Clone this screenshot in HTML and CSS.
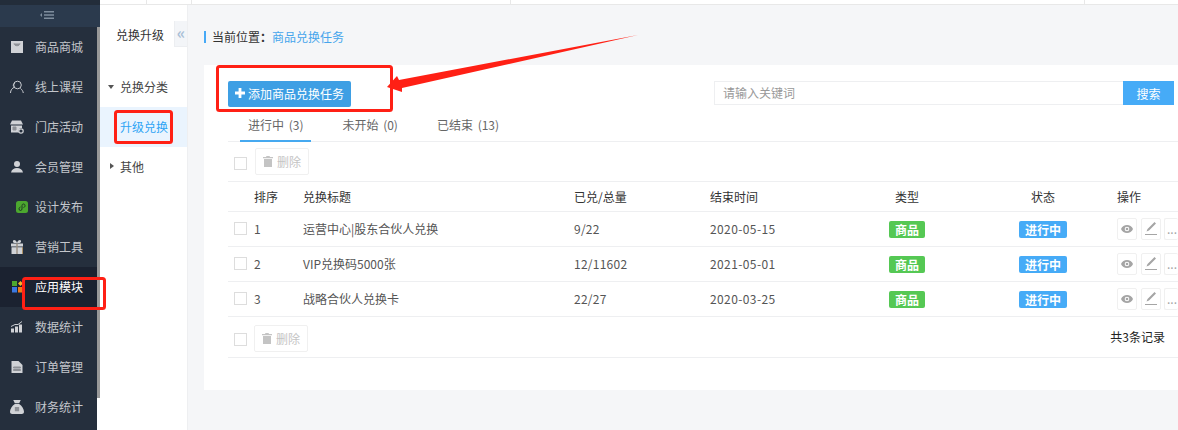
FILE: index.html
```html
<!DOCTYPE html>
<html lang="zh-CN">
<head>
  <meta charset="UTF-8" />
  <meta name="viewport" content="width=device-width, initial-scale=1.0" />
  <title>商品兑换任务</title>
  <link rel="stylesheet" href="styles.css">
</head>
<body>
  <div class="page">
    <aside class="side">
      <div class="side-toggle">
        <svg width="16" height="8" viewBox="0 0 16 8"><path class="toggle-icon" d="M0 4l2-2v4zM4 0h10v1.400H4zM4 3.300h10v1.400H4zM4 6.600h10V8H4z"/></svg>
      </div>
      <div class="side-body">
        <ul class="nav">
          <li class="nav-item">
            <svg class="nav-icon" viewBox="0 0 12 12"><path d="M0 0h12v12H0z"/><path class="cut" d="M3 2.500c.5 3 5.500 3 6 0" fill="none" stroke-width="1"/></svg>
            商品商城
          </li>
          <li class="nav-item">
            <svg class="nav-icon wide" viewBox="0 0 14 14" fill="none"><circle class="line" cx="7.500" cy="5" r="3.800"/><path class="line" d="M.5 13c0-3 1.800-5 4-5.800M5 2.500C3.500 3.500 3 5 3.500 6.500M10.500 8.500c1.500 1 2.500 2.800 2.800 4.500"/></svg>
            线上课程
          </li>
          <li class="nav-item">
            <svg class="nav-icon wide" viewBox="0 0 14 13"><path d="M2 0h9l2 4H0zM1 5h11v2.500a3 3 0 0 0-3 4.500H1z"/><path class="cut" d="M3 6.500h3v3H3z"/><circle cx="11" cy="10.500" r="2.200" fill="none" stroke="#d0d2d6" stroke-width="1.200"/></svg>
            门店活动
          </li>
          <li class="nav-item">
            <svg class="nav-icon" viewBox="0 0 12 12"><circle cx="6" cy="3" r="3"/><path d="M0 11.500C.5 8.500 3 7 6 7s5.500 1.500 6 4.500z"/></svg>
            会员管理
          </li>
          <li class="nav-item">
            <svg class="nav-icon shifted" viewBox="0 0 12 12"><rect width="12" height="12" rx="2.500" fill="#4ca82f"/><path d="M3 8c0 2 3 2 3 0V4.500c0-2 3-2 3 0S7.500 6.500 7.500 6.500M4.500 6C3.500 6.200 3 7 3 8" fill="none" stroke="#1c3a22" stroke-width="1"/></svg>
            设计发布
          </li>
          <li class="nav-item">
            <svg class="nav-icon tall" viewBox="0 0 12 14"><path d="M0 3.500h12v3H0zM.5 7.300h11V14H.5zM3 0c1.500 0 2.500 1 3 3 .5-2 1.500-3 3-3 1.500 0 1.500 3-.5 3h-5C1.500 3 1.500 0 3 0z"/><path d="M5.300 3.500h1.400V14H5.300z" fill="#9a8f80"/><path d="M11 7.300h.5V14H11z" fill="#e0a040"/></svg>
            营销工具
          </li>
          <li class="nav-item active">
            <svg class="nav-icon apps" viewBox="0 0 15 12"><path d="M0 0h5v5H0z" fill="#4ca82f"/><path d="M0 6h5v5.500H0z" fill="#3b78e0"/><path d="M6 6h5v5.500H6z" fill="#f07a1a"/><path d="M6 2.500L8.500 0 11 2.500 8.500 5z" fill="#f5b52a"/></svg>
            应用模块
          </li>
          <li class="nav-item">
            <svg class="nav-icon" viewBox="0 0 12 11"><path d="M0 7h3v4H0zM4 5h3v6H4zM8 3h3v8H8z"/><path class="line" d="M0 5l4-2 3 0 4-3" fill="none"/></svg>
            数据统计
          </li>
          <li class="nav-item">
            <svg class="nav-icon" viewBox="0 0 11 12"><path d="M0 0h7l4 4v8H0z"/><path class="cut" d="M2 6h7v1H2zM2 8.500h7v1H2z"/></svg>
            订单管理
          </li>
          <li class="nav-item">
            <svg class="nav-icon wide" viewBox="0 0 13 13"><path d="M3 0h7L8.500 3h-4zM4.500 3.800h4C11 5.500 13 8.500 13 11c0 1.500-1 2-2 2H2c-1 0-2-.5-2-2 0-2.500 2-5.500 4.500-7.200z"/><path class="cut" d="M5 7h3v1H5zM5 9h3v1H5z"/></svg>
            财务统计
          </li>
        </ul>
        <div class="side-track"><div class="side-thumb"></div></div>
      </div>
    </aside>

    <div class="right">
      <div class="topbar">
        <span class="top-cell c1"></span>
        <span class="top-cell c2"></span>
        <span class="top-cell c3"></span>
        <span class="top-cell c4"></span>
      </div>
      <div class="content">
        <div class="subnav">
          <div class="subnav-head">
            <span class="subnav-title">兑换升级</span>
            <span class="subnav-fold">«</span>
          </div>
          <ul class="tree">
            <li class="tree-row"><i class="arrow-down"></i>兑换分类</li>
            <li class="tree-row selected">升级兑换</li>
            <li class="tree-row"><i class="arrow-right"></i>其他</li>
          </ul>
        </div>

        <main class="main">
          <div class="crumb">当前位置<span class="colon">：</span><a class="crumb-link">商品兑换任务</a></div>
          <section class="panel">
            <div class="toolbar">
              <button class="btn-add">
                <svg width="10" height="10" viewBox="0 0 10 10"><path d="M3.600 0h2.800v3.600H10v2.800H6.400V10H3.600V6.400H0V3.600h3.600z" fill="#fff"/></svg>
                添加商品兑换任务
              </button>
              <div class="search">
                <input class="search-input" placeholder="请输入关键词">
                <button class="search-btn">搜索</button>
              </div>
            </div>

            <div class="tabs">
              <span class="tab current">进行中 (3)</span>
              <span class="tab">未开始 (0)</span>
              <span class="tab">已结束 (13)</span>
            </div>

            <div class="batch">
              <span class="check low"></span>
              <button class="btn-del">
                <svg width="10" height="11" viewBox="0 0 10 11"><path d="M3.500 0h3l.5 1h3v1.200H0V1h3zM1 3h8v8H1z" fill="#c4c4c4"/></svg>
                删除
              </button>
            </div>

            <table class="list">
              <colgroup>
                <col class="w-check"><col class="w-sort"><col class="w-title"><col class="w-count">
                <col class="w-time"><col class="w-type"><col class="w-state"><col class="w-ops">
              </colgroup>
              <thead>
                <tr>
                  <th></th><th>排序</th><th>兑换标题</th><th>已兑/总量</th><th>结束时间</th>
                  <th class="center">类型</th><th class="center">状态</th><th class="ops-head">操作</th>
                </tr>
              </thead>
              <tbody>
                <tr>
                  <td class="check-cell"><span class="check"></span></td>
                  <td>1</td><td>运营中心|股东合伙人兑换</td><td class="num">9/22</td><td class="date">2020-05-15</td>
                  <td class="center"><span class="badge green">商品</span></td>
                  <td class="center"><span class="badge blue">进行中</span></td>
                  <td class="ops-head">
                    <div class="ops">
                      <span class="op"><svg width="12" height="8" viewBox="0 0 12 8"><path d="M0 4c2-5.300 10-5.300 12 0-2 5.300-10 5.300-12 0z" fill="#a5a5a5"/><circle cx="6" cy="4" r="2.300" fill="#fff"/><circle cx="6" cy="4" r="1.300" fill="#a5a5a5"/></svg></span>
                      <span class="op"><svg width="12" height="13" viewBox="0 0 12 13"><path d="M9.500 0L11 1.500 4 8.500l-2.500 1 1-2.500zM0 12h12v1H0z" fill="#a5a5a5"/></svg></span>
                      <span class="op more">...</span>
                    </div>
                  </td>
                </tr>
                <tr>
                  <td class="check-cell"><span class="check"></span></td>
                  <td>2</td><td>VIP兑换码5000张</td><td class="num">12/11602</td><td class="date">2021-05-01</td>
                  <td class="center"><span class="badge green">商品</span></td>
                  <td class="center"><span class="badge blue">进行中</span></td>
                  <td class="ops-head">
                    <div class="ops">
                      <span class="op"><svg width="12" height="8" viewBox="0 0 12 8"><path d="M0 4c2-5.300 10-5.300 12 0-2 5.300-10 5.300-12 0z" fill="#a5a5a5"/><circle cx="6" cy="4" r="2.300" fill="#fff"/><circle cx="6" cy="4" r="1.300" fill="#a5a5a5"/></svg></span>
                      <span class="op"><svg width="12" height="13" viewBox="0 0 12 13"><path d="M9.500 0L11 1.500 4 8.500l-2.500 1 1-2.500zM0 12h12v1H0z" fill="#a5a5a5"/></svg></span>
                      <span class="op more">...</span>
                    </div>
                  </td>
                </tr>
                <tr>
                  <td class="check-cell"><span class="check"></span></td>
                  <td>3</td><td>战略合伙人兑换卡</td><td class="num">22/27</td><td class="date">2020-03-25</td>
                  <td class="center"><span class="badge green">商品</span></td>
                  <td class="center"><span class="badge blue">进行中</span></td>
                  <td class="ops-head">
                    <div class="ops">
                      <span class="op"><svg width="12" height="8" viewBox="0 0 12 8"><path d="M0 4c2-5.300 10-5.300 12 0-2 5.300-10 5.300-12 0z" fill="#a5a5a5"/><circle cx="6" cy="4" r="2.300" fill="#fff"/><circle cx="6" cy="4" r="1.300" fill="#a5a5a5"/></svg></span>
                      <span class="op"><svg width="12" height="13" viewBox="0 0 12 13"><path d="M9.500 0L11 1.500 4 8.500l-2.500 1 1-2.500zM0 12h12v1H0z" fill="#a5a5a5"/></svg></span>
                      <span class="op more">...</span>
                    </div>
                  </td>
                </tr>
              </tbody>
            </table>

            <div class="foot">
              <span class="check lower"></span>
              <button class="btn-del">
                <svg width="10" height="11" viewBox="0 0 10 11"><path d="M3.500 0h3l.5 1h3v1.200H0V1h3zM1 3h8v8H1z" fill="#c4c4c4"/></svg>
                删除
              </button>
              <span class="total">共3条记录</span>
            </div>
          </section>
        </main>
      </div>
    </div>

    <!-- red marks drawn on top of the screenshot -->
    <svg class="marks" width="1178" height="430" viewBox="0 0 1178 430">
      <rect x="217.500" y="66.500" width="174" height="44" rx="2" fill="none" stroke="#ff2015" stroke-width="3"/>
      <rect x="115.500" y="111.500" width="56" height="31" rx="2" fill="none" stroke="#ff2015" stroke-width="3"/>
      <rect x="23.500" y="278.500" width="81" height="30" rx="2" fill="none" stroke="#ff2015" stroke-width="3"/>
      <path d="M387 87L397 76L399 80L638 35L402 88L402 92z" fill="#ff2015"/>
    </svg>
  </div>
</body>
</html>
```

FILE: styles.css
```css
* {
  margin: 0;
  padding: 0;
  box-sizing: border-box;
}

body {
  background: #fff;
  font-family: "Noto Sans CJK SC", sans-serif;
  font-size: 12px;
  color: #555;
  overflow: hidden;
}

ul {
  list-style: none;
}

button,
input {
  font-family: inherit;
  font-size: 12px;
  border: 0;
}

.page {
  position: relative;
  display: flex;
  width: 1178px;
  height: 430px;
  overflow: hidden;
}

/* left dark menu */
.side {
  flex: none;
  width: 100px;
  display: flex;
  flex-direction: column;
}

.side-toggle {
  height: 27px;
  border-top: 5px solid #232d3a;
  background: #2b3a4d;
  display: flex;
  align-items: center;
  justify-content: center;
  padding-right: 4px;
  padding-bottom: 2px;
}

.toggle-icon {
  fill: #7f8d9d;
}

.side-body {
  flex: 1;
  display: flex;
}

.nav {
  width: 97px;
  background: #252f3d;
}

.nav-item {
  height: 40px;
  display: flex;
  align-items: center;
  gap: 12px;
  padding-left: 11px;
  padding-bottom: 2px;
  color: #c3c6cb;
  white-space: nowrap;
}

.nav-item.active {
  background: #1b2230;
  color: #fff;
}

.nav-icon {
  flex: none;
  width: 12px;
  height: 12px;
  margin-top: 2px;
  overflow: visible;
  fill: #d0d2d6;
}

.nav-icon .cut {
  fill: #8d9096;
  stroke: #8d9096;
}

.nav-icon .line {
  stroke: #c9ccd1;
  stroke-width: 1;
  fill: none;
}

.nav-icon.wide {
  width: 14px;
  height: 14px;
  margin-left: -1px;
  margin-right: -1px;
}

.nav-icon.tall {
  height: 14px;
}

.nav-icon.shifted {
  margin-left: 5px;
  margin-right: -5px;
}

.nav-icon.apps {
  width: 15px;
  margin-left: 1px;
  margin-right: -4px;
}

.side-track {
  width: 3px;
  background: #fff;
}

.side-thumb {
  height: 371px;
  background: #999;
}

/* right part */
.right {
  flex: 1;
  display: flex;
  flex-direction: column;
  min-width: 0;
}

.topbar {
  flex: none;
  height: 5px;
  display: flex;
  border-bottom: 1px solid #e8e8e8;
}

.top-cell {
  border-right: 1px solid #e8e8e8;
}

.c1 { width: 47px; }
.c2 { width: 45px; }
.c3 { width: 319px; }
.c4 { width: 574px; }

.content {
  flex: 1;
  display: flex;
  min-height: 0;
}

.subnav {
  flex: none;
  width: 88px;
  border-right: 1px solid #eeeff1;
  background: #fff;
}

.subnav-head {
  margin-top: 16px;
  height: 26px;
  display: flex;
}

.subnav-title {
  width: 74px;
  display: flex;
  align-items: center;
  justify-content: center;
  padding-left: 6px;
  color: #333;
}

.subnav-fold {
  width: 13px;
  background: #f3f5f8;
  border-left: 1px solid #eceef1;
  border-bottom: 1px solid #eceef1;
  color: #a9bfd6;
  font-size: 16px;
  font-weight: 700;
  line-height: 22px;
  text-align: center;
}

.tree {
  margin-top: 20px;
}

.tree-row {
  height: 40px;
  display: flex;
  align-items: center;
  padding-left: 20px;
  padding-bottom: 2px;
  position: relative;
  color: #444;
}

.tree-row.selected {
  background: #eaf4fe;
  color: #2ea4f5;
}

.arrow-down {
  position: absolute;
  left: 8px;
  top: 18px;
  border-top: 4px solid #555;
  border-left: 3.500px solid transparent;
  border-right: 3.500px solid transparent;
}

.arrow-right {
  position: absolute;
  left: 10px;
  top: 16px;
  border-left: 4px solid #555;
  border-top: 3.500px solid transparent;
  border-bottom: 3.500px solid transparent;
}

.main {
  flex: 1;
  min-width: 0;
  background: #f5f6f8;
  padding-left: 16px;
}

.crumb {
  margin-top: 26px;
  margin-bottom: 22px;
  height: 12px;
  line-height: 12px;
  padding-left: 6px;
  border-left: 2px solid #46a9f6;
  color: #333;
}

.colon {
  font-family: "Noto Sans CJK TC", sans-serif;
  font-weight: 700;
}

.crumb-link {
  color: #46a5ec;
}

.panel {
  height: 325px;
  background: #fff;
  padding: 16px 0 0 24px;
  overflow: hidden;
}

.toolbar {
  display: flex;
  justify-content: space-between;
  align-items: flex-start;
  height: 26px;
  padding-right: 4px;
}

.btn-add {
  width: 123px;
  height: 26px;
  background: #3e9fe4;
  border-radius: 2px;
  color: #fff;
  display: flex;
  align-items: center;
  gap: 3px;
  padding-left: 7px;
  padding-bottom: 2px;
}

.search {
  display: flex;
  width: 460px;
  height: 24px;
}

.search-input {
  flex: 1;
  min-width: 0;
  border: 1px solid #eeeff1;
  border-right: 0;
  padding-left: 8px;
  padding-bottom: 2px;
  color: #555;
}

.search-input::placeholder {
  color: #999;
}

.search-btn {
  width: 51px;
  background: #46abf7;
  color: #fff;
}

.tabs {
  height: 35px;
  display: flex;
  gap: 23px;
  padding-left: 12px;
  border-bottom: 1px solid #eeeff1;
}

.tab {
  height: 35px;
  line-height: 36px;
  padding: 0 8px;
  color: #666;
  word-spacing: 2px;
}

.tab.current {
  border-bottom: 2px solid #46a9f0;
}

.batch {
  height: 40px;
  display: flex;
  align-items: center;
  gap: 8px;
  padding-left: 6px;
  border-bottom: 1px solid #eeeff1;
}

.check {
  display: inline-block;
  width: 13px;
  height: 13px;
  border: 1px solid #ddd;
  background: #fff;
}

.check.low {
  margin-top: 3px;
}

.check.lower {
  margin-top: 5px;
}

.btn-del {
  width: 54px;
  height: 27px;
  background: #fff;
  border: 1px solid #f0f0f0;
  border-radius: 2px;
  color: #c4c4c4;
  display: flex;
  align-items: center;
  justify-content: center;
  gap: 4px;
}

.list {
  width: 952px;
  table-layout: fixed;
  border-collapse: separate;
  border-spacing: 0;
}

.w-check { width: 26px; }
.w-sort { width: 49px; }
.w-title { width: 271px; }
.w-count { width: 136px; }
.w-time { width: 116px; }
.w-type { width: 162px; }
.w-state { width: 110px; }
.w-ops { width: 82px; }

.list th {
  height: 30px;
  font-weight: 400;
  color: #333;
  text-align: left;
  border-bottom: 1px solid #eeeff1;
}

.list td {
  height: 35px;
  padding-bottom: 1px;
  border-bottom: 1px solid #eeeff1;
  white-space: nowrap;
}

.list .center {
  text-align: center;
}

.list td.num {
  letter-spacing: .25px;
}

.list td.date {
  letter-spacing: .4px;
}

.list td.check-cell {
  padding-left: 6px;
}

.check-cell .check {
  display: block;
}

.list .ops-head {
  padding-left: 19px;
}

.ops {
  display: flex;
  gap: 4px;
}

.op {
  flex: none;
  display: flex;
  align-items: center;
  justify-content: center;
  width: 20px;
  height: 22px;
  border: 1px solid #f0f0f0;
  border-radius: 2px;
  background: #fff;
  color: #a5a5a5;
}

.op.more {
  margin-left: -1px;
  justify-content: flex-start;
  padding-left: 2px;
  width: 14px;
  border-right: 0;
  letter-spacing: 0;
}

.badge {
  display: inline-block;
  height: 17px;
  line-height: 17px;
  padding: 0 6px;
  border-radius: 2px;
  color: #fff;
  font-weight: 700;
  vertical-align: middle;
}

.green {
  background: #55c854;
}

.blue {
  background: #46abf7;
}

.foot {
  height: 41px;
  display: flex;
  align-items: center;
  gap: 7px;
  padding-left: 6px;
  padding-right: 13px;
  border-bottom: 1px solid #eeeff1;
}

.foot .btn-del {
  margin-top: 2px;
}

.total {
  margin-left: auto;
  margin-top: -2px;
  color: #222;
}

/* annotations over the page */
.marks {
  position: absolute;
  left: 0;
  top: 0;
  pointer-events: none;
}
```
